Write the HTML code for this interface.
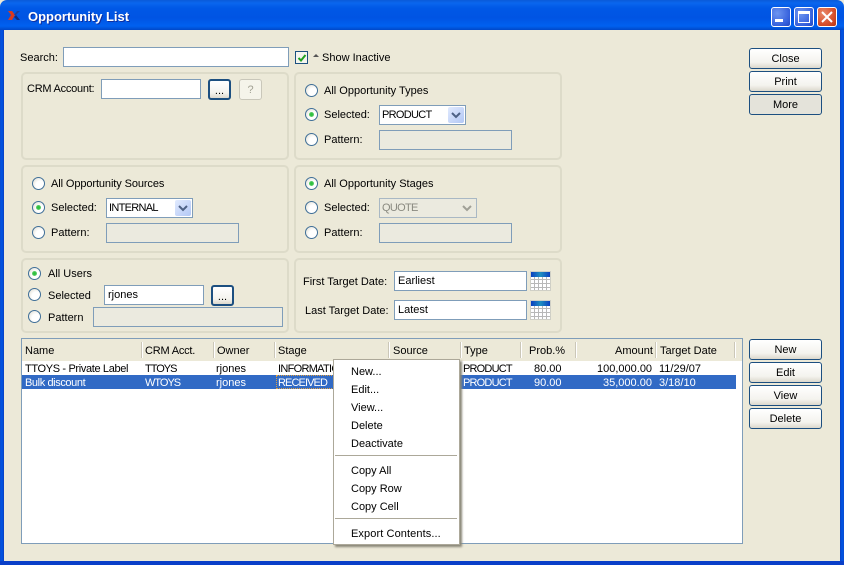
<!DOCTYPE html>
<html><head><meta charset="utf-8"><title>Opportunity List</title>
<style>
html,body{margin:0;padding:0;width:844px;height:565px;overflow:hidden;background:#ece9d8}
body{position:relative;font:11px "Liberation Sans",sans-serif;color:#000}
div{position:absolute;box-sizing:border-box}
.t{white-space:nowrap;line-height:14px;height:14px;margin-top:1px}
.u{letter-spacing:-.7px}
.g{border:2px solid #dddbc9;border-radius:5px}
.i{background:#fff;border:1px solid #7f9db9;padding:0 0 0 3px;line-height:18px;white-space:nowrap}
.d{background:#ebeadf;border:1px solid #7f9db9}
.r{width:13px;height:13px;border-radius:50%;border:1px solid #3f6f98;background:radial-gradient(circle at 65% 65%,#fff 40%,#dcd9cc 100%)}
.r.s:after{content:"";position:absolute;left:3px;top:3px;width:5px;height:5px;border-radius:50%;background:radial-gradient(circle,#2fc03f 30%,#8fdc95 100%)}
.b{border:1px solid #1c4f80;border-radius:3px;background:linear-gradient(#fff,#f4f3ee 70%,#dcd8cc);text-align:center;line-height:20px;white-space:nowrap}
.c{background:#fff;border:1px solid #7f9db9;line-height:18px;padding-left:2px;white-space:nowrap}
.a{position:absolute;right:1px;top:1px;width:16px;height:16px;background:linear-gradient(135deg,#e1eafe,#b2c7f5);border-radius:2px}
.sep{top:342px;width:2px;height:16px;border-left:1px solid #cbc7b8;border-right:1px solid #fff}
.cal{width:21px;height:20px;background:repeating-linear-gradient(90deg,transparent 0 3px,#b8b8b8 3px 4px),repeating-linear-gradient(#fff 0 3px,#b8b8b8 3px 4px);border:1px solid #cfcfc6}
.cal:before{content:"";position:absolute;left:0;top:0;right:0;height:5px;background:linear-gradient(90deg,#0a3fc0,#1f8fc0,#0a3fc0)}
.wb{top:7px;width:20px;height:20px;border:1px solid #fff;border-radius:3px;background:radial-gradient(circle at 30% 30%,#6d95f0,#3560dc 70%,#2347c0)}
</style></head><body>

<!-- Title bar -->
<div style="left:0;top:0;width:844px;height:30px;background:linear-gradient(#0a5ad8 0,#0a66ee 3px,#0058e6 8px,#0054e3 18px,#0061f0 26px,#0048c8 30px);border-radius:7px 7px 0 0"></div>
<div style="left:0;top:30px;width:4px;height:535px;background:linear-gradient(90deg,#0a4bd0,#0055e5 50%,#0a3fc0)"></div>
<div style="left:840px;top:30px;width:4px;height:535px;background:linear-gradient(90deg,#0a3fc0,#0055e5 50%,#0a4bd0)"></div>
<div style="left:0;top:561px;width:844px;height:4px;background:#0a3fc8"></div>
<svg style="position:absolute;left:7px;top:9px" width="15" height="14" viewBox="0 0 15 14"><path d="M1 2h4l3 4-3 5H1l3-5z" fill="#d83a20"/><path d="M7 6l3-4h3l-4 4z" fill="#1c3f9c"/><path d="M7 8l2-2 4 5h-3z" fill="#0c2c80"/></svg>
<div class="t" style="left:28px;top:9px;margin-top:0;color:#fff;font-size:13px;font-weight:bold;line-height:15px;height:15px;text-shadow:1px 1px 0 #0f2f9f;letter-spacing:0">Opportunity List</div>
<div class="wb" style="left:771px"><div style="left:3px;top:11px;width:8px;height:3px;background:#fff"></div></div>
<div class="wb" style="left:794px"><div style="left:3px;top:3px;width:12px;height:12px;border:1px solid #fff;border-top:3px solid #fff"></div></div>
<div class="wb" style="left:817px;background:radial-gradient(circle at 30% 30%,#e8896a,#d8502c 60%,#b8350f)"><svg style="position:absolute;left:2px;top:2px" width="14" height="14"><path d="M2 2l10 10M12 2L2 12" stroke="#fff" stroke-width="2"/></svg></div>

<!-- Search -->
<div class="t" style="left:20px;top:50px">Search:</div>
<div class="i" style="left:63px;top:47px;width:226px;height:20px"></div>
<div style="left:295px;top:51px;width:13px;height:13px;background:#f5f5ef;border:1px solid #1c5180"><svg style="position:absolute;left:1px;top:1px" width="10" height="10"><path d="M1.5 5l2.5 2.5L8.5 2" fill="none" stroke="#21a121" stroke-width="2"/></svg></div>
<svg style="position:absolute;left:313px;top:53px" width="6" height="5"><path d="M0 4l3-3 3 3z" fill="#555"/></svg>
<div class="t" style="left:322px;top:50px">Show Inactive</div>

<!-- Groups -->
<div class="g" style="left:21px;top:72px;width:268px;height:88px"></div>
<div class="g" style="left:294px;top:72px;width:268px;height:88px"></div>
<div class="g" style="left:21px;top:165px;width:268px;height:88px"></div>
<div class="g" style="left:294px;top:165px;width:268px;height:88px"></div>
<div class="g" style="left:21px;top:258px;width:268px;height:75px"></div>
<div class="g" style="left:294px;top:258px;width:268px;height:75px"></div>

<!-- CRM -->
<div class="t" style="left:27px;top:81px;letter-spacing:-.25px">CRM Account:</div>
<div class="i" style="left:101px;top:79px;width:100px;height:20px"></div>
<div class="b" style="left:208px;top:79px;width:23px;height:21px;border-width:2px;border-color:#1c4f80;line-height:20px">...</div>
<div class="b" style="left:239px;top:79px;width:23px;height:21px;border:1px solid #c9c7ba;background:#f5f4ea;color:#a3a294">?</div>

<!-- Types -->
<div class="r" style="left:305px;top:84px"></div><div class="t" style="left:324px;top:83px">All Opportunity Types</div>
<div class="r s" style="left:305px;top:108px"></div><div class="t" style="left:324px;top:107px">Selected:</div>
<div class="c" style="left:379px;top:105px;width:87px;height:20px"><span class="u">PRODUCT</span><div class="a"><svg style="position:absolute;left:3px;top:5px" width="10" height="7"><path d="M1 1l4 4 4-4" fill="none" stroke="#4d6185" stroke-width="2"/></svg></div></div>
<div class="r" style="left:305px;top:133px"></div><div class="t" style="left:324px;top:132px">Pattern:</div>
<div class="d" style="left:379px;top:130px;width:133px;height:20px"></div>

<!-- Sources -->
<div class="r" style="left:32px;top:177px"></div><div class="t" style="left:51px;top:176px;letter-spacing:-.1px">All Opportunity Sources</div>
<div class="r s" style="left:32px;top:201px"></div><div class="t" style="left:51px;top:200px">Selected:</div>
<div class="c" style="left:106px;top:198px;width:87px;height:20px"><span class="u">INTERNAL</span><div class="a"><svg style="position:absolute;left:3px;top:5px" width="10" height="7"><path d="M1 1l4 4 4-4" fill="none" stroke="#4d6185" stroke-width="2"/></svg></div></div>
<div class="r" style="left:32px;top:226px"></div><div class="t" style="left:51px;top:225px">Pattern:</div>
<div class="d" style="left:106px;top:223px;width:133px;height:20px"></div>

<!-- Stages -->
<div class="r s" style="left:305px;top:177px"></div><div class="t" style="left:324px;top:176px">All Opportunity Stages</div>
<div class="r" style="left:305px;top:201px"></div><div class="t" style="left:324px;top:200px">Selected:</div>
<div class="c" style="left:379px;top:198px;width:98px;height:20px;background:#ebeadf;color:#8a8a80;border-color:#a9b8c4"><span class="u">QUOTE</span><svg style="position:absolute;right:4px;top:6px" width="10" height="7"><path d="M1 1l4 4 4-4" fill="none" stroke="#a0a096" stroke-width="2"/></svg></div>
<div class="r" style="left:305px;top:226px"></div><div class="t" style="left:324px;top:225px">Pattern:</div>
<div class="d" style="left:379px;top:223px;width:133px;height:20px"></div>

<!-- Users -->
<div class="r s" style="left:28px;top:267px"></div><div class="t" style="left:48px;top:266px">All Users</div>
<div class="r" style="left:28px;top:288px"></div><div class="t" style="left:48px;top:288px">Selected</div>
<div class="i" style="left:104px;top:285px;width:100px;height:20px">rjones</div>
<div class="b" style="left:211px;top:285px;width:23px;height:21px;border-width:2px;line-height:20px">...</div>
<div class="r" style="left:28px;top:310px"></div><div class="t" style="left:48px;top:310px">Pattern</div>
<div class="d" style="left:93px;top:307px;width:190px;height:20px"></div>

<!-- Dates -->
<div class="t" style="left:303px;top:274px">First Target Date:</div>
<div class="i" style="left:394px;top:271px;width:133px;height:20px">Earliest</div>
<div class="cal" style="left:530px;top:271px"></div>
<div class="t" style="left:305px;top:303px">Last Target Date:</div>
<div class="i" style="left:394px;top:300px;width:133px;height:20px">Latest</div>
<div class="cal" style="left:530px;top:300px"></div>

<!-- Right buttons -->
<div class="b" style="left:749px;top:48px;width:73px;height:21px">Close</div>
<div class="b" style="left:749px;top:71px;width:73px;height:21px">Print</div>
<div class="b" style="left:749px;top:94px;width:73px;height:21px;background:#e4e3da">More</div>
<div class="b" style="left:749px;top:339px;width:73px;height:21px">New</div>
<div class="b" style="left:749px;top:362px;width:73px;height:21px">Edit</div>
<div class="b" style="left:749px;top:385px;width:73px;height:21px">View</div>
<div class="b" style="left:749px;top:408px;width:73px;height:21px">Delete</div>

<!-- List -->
<div style="left:21px;top:338px;width:722px;height:206px;background:#fff;border:1px solid #7f9db9"></div>
<div style="left:22px;top:339px;width:720px;height:22px;background:#ece9d8"></div>
<div class="t" style="left:25px;top:343px">Name</div><div class="sep" style="left:141px"></div>
<div class="t" style="left:145px;top:343px;letter-spacing:-.2px">CRM Acct.</div><div class="sep" style="left:213px"></div>
<div class="t" style="left:217px;top:343px">Owner</div><div class="sep" style="left:274px"></div>
<div class="t" style="left:278px;top:343px">Stage</div><div class="sep" style="left:388px"></div>
<div class="t" style="left:393px;top:343px">Source</div><div class="sep" style="left:460px"></div>
<div class="t" style="left:464px;top:343px">Type</div><div class="sep" style="left:520px"></div>
<div class="t" style="left:529px;top:343px">Prob.%</div><div class="sep" style="left:575px"></div>
<div class="t" style="left:615px;top:343px">Amount</div><div class="sep" style="left:655px"></div>
<div class="t" style="left:660px;top:343px">Target Date</div><div class="sep" style="left:734px"></div>

<div class="t" style="left:25px;top:361px;letter-spacing:-.35px">TTOYS - Private Label</div>
<div class="t u" style="left:145px;top:361px;letter-spacing:-1px">TTOYS</div>
<div class="t" style="left:216px;top:361px">rjones</div>
<div class="t u" style="left:278px;top:361px">INFORMATION</div>
<div class="t u" style="left:463px;top:361px;letter-spacing:-.8px">PRODUCT</div>
<div class="t" style="left:534px;top:361px">80.00</div>
<div class="t" style="left:597px;top:361px">100,000.00</div>
<div class="t" style="left:659px;top:361px">11/29/07</div>

<div style="left:22px;top:375px;width:714px;height:14px;background:#316ac5"></div>
<div style="left:276px;top:375px;width:112px;height:14px;border:1px dotted #e0a040"></div>
<div class="t" style="left:25px;top:375px;color:#fff;letter-spacing:-.4px">Bulk discount</div>
<div class="t u" style="left:145px;top:375px;color:#fff;letter-spacing:-1px">WTOYS</div>
<div class="t" style="left:216px;top:375px;color:#fff">rjones</div>
<div class="t u" style="left:278px;top:375px;color:#fff;letter-spacing:-.9px">RECEIVED</div>
<div class="t u" style="left:463px;top:375px;color:#fff;letter-spacing:-.8px">PRODUCT</div>
<div class="t" style="left:534px;top:375px;color:#fff">90.00</div>
<div class="t" style="left:603px;top:375px;color:#fff">35,000.00</div>
<div class="t" style="left:659px;top:375px;color:#fff">3/18/10</div>

<!-- Context menu -->
<div style="left:333px;top:359px;width:127px;height:186px;background:#fff;border:1px solid #aca899;box-shadow:2px 2px 2px #8a8778"></div>
<div class="t" style="left:351px;top:364px">New...</div>
<div class="t" style="left:351px;top:382px">Edit...</div>
<div class="t" style="left:351px;top:400px">View...</div>
<div class="t" style="left:351px;top:418px">Delete</div>
<div class="t" style="left:351px;top:436px">Deactivate</div>
<div style="left:335px;top:455px;width:122px;height:1px;background:#aca899"></div>
<div class="t" style="left:351px;top:463px">Copy All</div>
<div class="t" style="left:351px;top:481px">Copy Row</div>
<div class="t" style="left:351px;top:499px">Copy Cell</div>
<div style="left:335px;top:518px;width:122px;height:1px;background:#aca899"></div>
<div class="t" style="left:351px;top:526px;letter-spacing:.1px">Export Contents...</div>

</body></html>
